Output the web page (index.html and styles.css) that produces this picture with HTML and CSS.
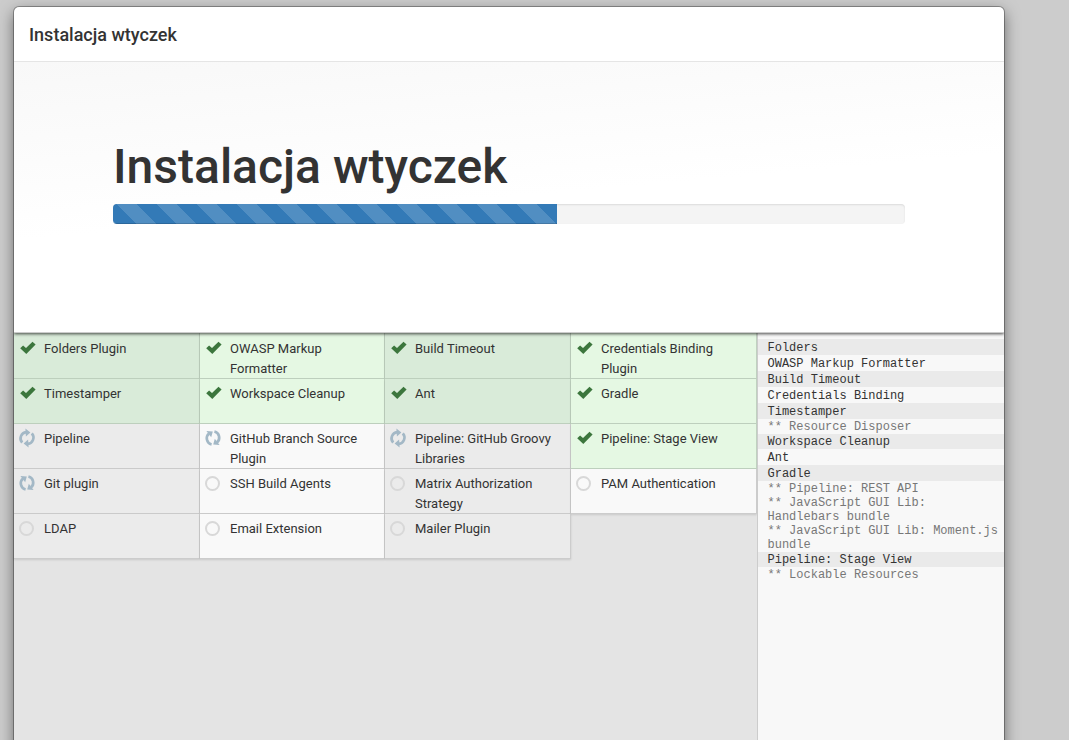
FILE: index.html
```
<!DOCTYPE html>
<html lang="pl">
<head>
<meta charset="utf-8">
<title>Instalacja wtyczek</title>
<link rel="stylesheet" href="styles.css">
</head>
<body>
<svg class="defs" width="0" height="0" aria-hidden="true">
  <symbol id="check" viewBox="0 0 16 14"><path d="M0.2 7.3 3.1 4.4 6 6.9 12.5 0.8 15.6 3.6 6.3 13Z"/></symbol>
  <symbol id="sync" viewBox="0 0 16 18"><path class="arc" d="M3.2 13.6A6.3 6.3 0 0 1 7.2 3.1M12.8 4.4A6.3 6.3 0 0 1 8.8 14.9"/><path class="head" d="M6.4 -0.4 11.4 3.6 6.9 7.4ZM9.6 18.4 4.6 14.4 9.1 10.6Z"/></symbol>
</svg>
<main class="dialog">
  <header class="header">Instalacja wtyczek</header>
  <section class="hero">
    <h1 class="title">Instalacja wtyczek</h1>
    <div class="progress"><div class="bar"></div></div>
  </section>
  <div class="body">
    <div class="left">
      <div class="plugins">
        <div class="plugin ok"><svg class="check"><use href="#check"/></svg>Folders Plugin</div>
        <div class="plugin ok"><svg class="check"><use href="#check"/></svg>OWASP Markup<br>Formatter</div>
        <div class="plugin ok"><svg class="check"><use href="#check"/></svg>Build Timeout</div>
        <div class="plugin ok"><svg class="check"><use href="#check"/></svg>Credentials Binding<br>Plugin</div>
        <div class="plugin ok"><svg class="check"><use href="#check"/></svg>Timestamper</div>
        <div class="plugin ok"><svg class="check"><use href="#check"/></svg>Workspace Cleanup</div>
        <div class="plugin ok"><svg class="check"><use href="#check"/></svg>Ant</div>
        <div class="plugin ok"><svg class="check"><use href="#check"/></svg>Gradle</div>
        <div class="plugin"><svg class="sync"><use href="#sync"/></svg>Pipeline</div>
        <div class="plugin"><svg class="sync turned"><use href="#sync"/></svg>GitHub Branch Source<br>Plugin</div>
        <div class="plugin"><svg class="sync"><use href="#sync"/></svg>Pipeline: GitHub Groovy<br>Libraries</div>
        <div class="plugin ok"><svg class="check"><use href="#check"/></svg>Pipeline: Stage View</div>
        <div class="plugin"><svg class="sync turned"><use href="#sync"/></svg>Git plugin</div>
        <div class="plugin"><i class="pending"></i>SSH Build Agents</div>
        <div class="plugin"><i class="pending"></i>Matrix Authorization<br>Strategy</div>
        <div class="plugin"><i class="pending"></i>PAM Authentication</div>
        <div class="plugin"><i class="pending"></i>LDAP</div>
        <div class="plugin"><i class="pending"></i>Email Extension</div>
        <div class="plugin"><i class="pending"></i>Mailer Plugin</div>
      </div>
    </div>
    <aside class="console">
      <div class="line shaded">Folders</div>
      <div class="line">OWASP Markup Formatter</div>
      <div class="line shaded">Build Timeout</div>
      <div class="line">Credentials Binding</div>
      <div class="line shaded">Timestamper</div>
      <div class="dep">** Resource Disposer</div>
      <div class="line shaded">Workspace Cleanup</div>
      <div class="line">Ant</div>
      <div class="line shaded">Gradle</div>
      <div class="dep">** Pipeline: REST API</div>
      <div class="dep">** JavaScript GUI Lib:<br>Handlebars bundle</div>
      <div class="dep">** JavaScript GUI Lib: Moment.js<br>bundle</div>
      <div class="line shaded">Pipeline: Stage View</div>
      <div class="dep">** Lockable Resources</div>
    </aside>
  </div>
</main>
</body>
</html>
```
FILE: styles.css
```
* { box-sizing: border-box; }
body {
  margin: 0;
  height: 740px;
  overflow: hidden;
  padding: 7px 0 0 14px;
  background: #ccc;
  color: #333;
  font: 13px/20px Roboto, sans-serif;
}
.defs { position: absolute; }
.dialog {
  display: flex;
  flex-direction: column;
  width: 990px;
  height: 760px;
  border-radius: 5px;
  background: #fff;
  box-shadow: 0 0 0 1px rgba(0, 0, 0, .3), 0 5px 15px rgba(0, 0, 0, .5);
}
.header {
  height: 55px;
  padding: 18px 15px 0;
  border-bottom: 1px solid #e5e5e5;
  font-size: 18px;
  font-weight: 500;
}
.hero {
  position: relative;
  z-index: 1;
  height: 271px;
  margin-bottom: -1px;
  padding: 78px 99px 0;
  border-bottom: 1px solid #ccc;
  background: linear-gradient(175deg, #f8f8f8, #fff 50%);
  box-shadow: 0 1px 3px rgba(0, 0, 0, .7);
  clip-path: inset(0 0 -6px 0);
}
.title {
  margin: 0;
  height: 64px;
  font-size: 48px;
  line-height: 54px;
  font-weight: 500;
}
.progress {
  height: 20px;
  overflow: hidden;
  border-radius: 4px;
  background: #f4f4f4;
  box-shadow: inset 0 1px 2px rgba(0, 0, 0, .1);
}
.bar {
  width: 444px;
  height: 20px;
  background: #337ab7 linear-gradient(45deg, rgba(255, 255, 255, .15) 25%, transparent 25%, transparent 50%, rgba(255, 255, 255, .15) 50%, rgba(255, 255, 255, .15) 75%, transparent 75%) 4px 0 / 40px 40px;
  box-shadow: inset 0 -1px 0 rgba(0, 0, 0, .15);
}
.body { display: flex; flex: 1; min-height: 0; }
.left { width: 743px; background: #e4e4e4; }
.plugins {
  display: grid;
  grid-template-columns: 186px 185px 186px 186px;
  grid-auto-rows: 45px;
  padding-top: 2px;
}
.plugin {
  padding: 5px 0 0 30px;
  background: #f9f9f9;
  border-right: 1px solid #ccc;
  border-bottom: 1px solid #ccc;
  box-shadow: 0 1px 2px rgba(0, 0, 0, .12);
  white-space: nowrap;
}
.plugin:nth-child(odd) { background: #ebebeb; }
.plugin.ok { background: #e5f8e3; border-color: #bfd1bf; }
.plugin.ok:nth-child(odd) { background: #d9ebd9; }
.plugin:nth-child(-n+4) { margin-top: -2px; padding-top: 7px; }
.check, .sync, .pending { float: left; }
.check {
  width: 16px;
  height: 14px;
  margin: 2px 0 0 -24px;
  fill: #3c763d;
}
.sync {
  width: 16px;
  height: 18px;
  margin-left: -25px;
  overflow: visible;
}
.arc { fill: none; stroke: #a3b8c6; stroke-width: 2.7; }
.head { fill: #a3b8c6; }
.turned { transform: rotate(-34deg); }
#sync { overflow: visible; }
.pending {
  width: 15px;
  height: 15px;
  margin: 2px 0 0 -25px;
  border: 2px solid #d8d8d8;
  border-radius: 50%;
}
.console {
  flex: 1;
  padding-top: 7px;
  border-left: 1px solid #ccc;
  background: #f8f8f8;
  color: #333;
  font: 12px/14px "Courier New", "Liberation Mono", monospace;
  white-space: nowrap;
}
.line { height: 16px; padding: 2px 0 0 9.5px; }
.shaded { background: #eaeaea; }
.dep { padding-left: 9.5px; color: #777; }
.line + .dep { padding-top: 1px; }
.dep + .line { margin-top: -1px; }
.dep + .line { margin-top: 0; padding-top: 1px; }
.line + .dep { margin-top: 0; }
.dep + .line { height: 15px; }
```
